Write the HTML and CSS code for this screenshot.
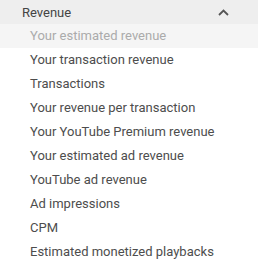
FILE: index.html
```html
<!DOCTYPE html>
<html>
<head>
    <title>Revenue metrics</title>
    <link rel="stylesheet" href="styles.css">
</head>
<body>
    <div class="group">
        <div class="group-header">
            <span>Revenue</span>
            <svg class="chevron" width="11" height="7" viewBox="0 0 11 7">
                <path d="M1 6 L5.5 1.5 L10 6" fill="none" stroke="#555" stroke-width="1.8"/>
            </svg>
        </div>
        <div class="item disabled">Your estimated revenue</div>
        <div class="item">Your transaction revenue</div>
        <div class="item">Transactions</div>
        <div class="item">Your revenue per transaction</div>
        <div class="item">Your YouTube Premium revenue</div>
        <div class="item">Your estimated ad revenue</div>
        <div class="item">YouTube ad revenue</div>
        <div class="item">Ad impressions</div>
        <div class="item">CPM</div>
        <div class="item">Estimated monetized playbacks</div>
    </div>
</body>
</html>
```

FILE: styles.css
```css
body {
    margin: 0;
    background: #fff;
    font-family: Roboto, Arial, sans-serif;
    font-size: 13px;
    color: #4d4d4d;
}
.group {
    display: flex;
    flex-direction: column;
}
.group-header {
    display: flex;
    align-items: center;
    justify-content: space-between;
    height: 24px;
    padding: 0 29px 0 22px;
    background: #eeeeee;
    color: #444;
}
.chevron {
    display: block;
}
.item {
    height: 24px;
    line-height: 24px;
    padding-left: 30px;
    color: #4d4d4d;
}
.item.disabled {
    background: #f5f5f5;
    color: #ababab;
}
```
